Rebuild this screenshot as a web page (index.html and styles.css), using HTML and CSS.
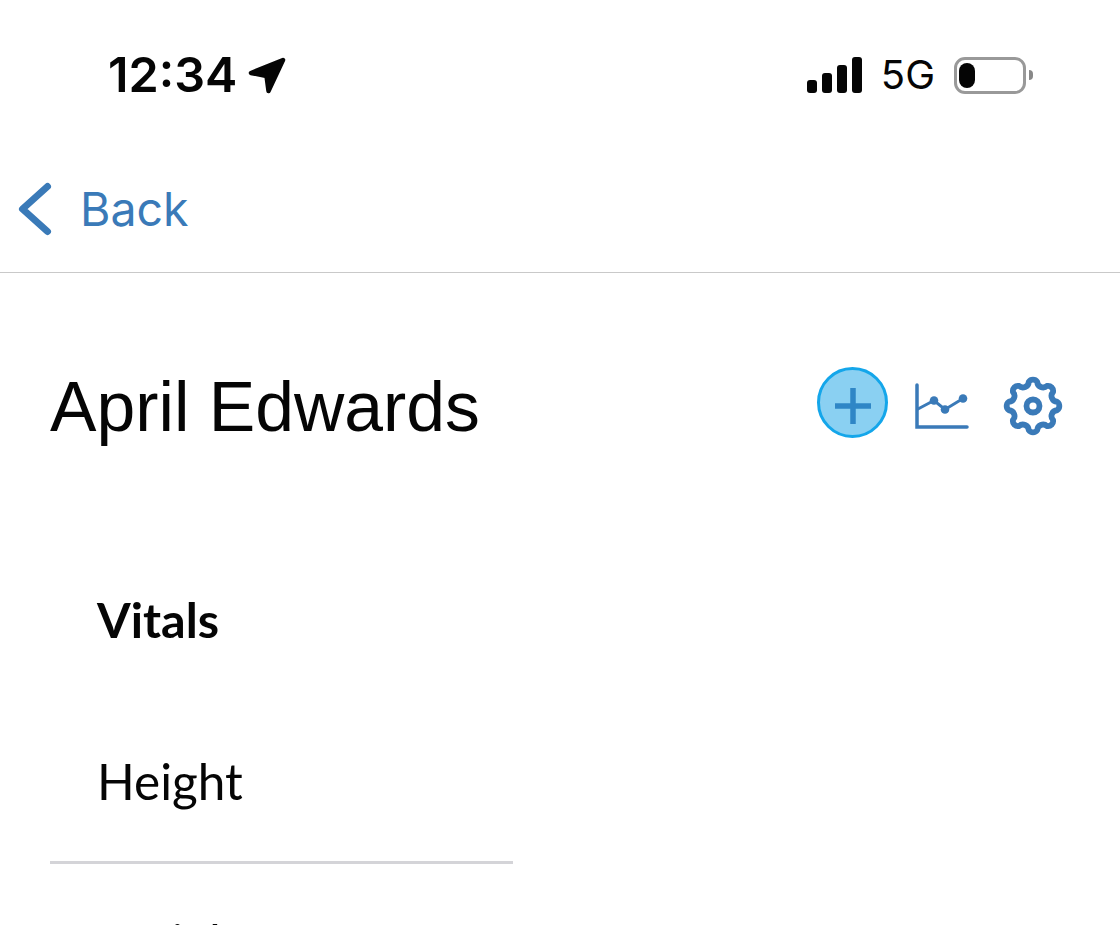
FILE: index.html
```html
<!DOCTYPE html>
<html lang="en">
<head>
<meta charset="utf-8">
<title>April Edwards</title>
<link rel="stylesheet" href="styles.css">
</head>
<body>
<div class="screen">
  <header class="status">
    <div class="status-left">
      <span class="time">12:34</span>
      <svg class="loc" width="40" height="40" viewBox="0 0 40 40"><path d="M36 5 L4 18 L19.5 21 L21.5 36 Z" fill="#050505" stroke="#050505" stroke-width="4.5" stroke-linejoin="round"/></svg>
    </div>
    <div class="status-right">
      <div class="bars"><i class="b1"></i><i class="b2"></i><i class="b3"></i><i class="b4"></i></div>
      <span class="net">5G</span>
      <div class="battery"><div class="charge"></div></div>
      <div class="nub"></div>
    </div>
  </header>
  <nav class="nav">
    <svg class="chev" width="36" height="56" viewBox="0 0 36 56"><path d="M30.5 5.5 L5.5 28 L30.5 50.5" fill="none" stroke="#3a7ab8" stroke-width="7" stroke-linecap="round" stroke-linejoin="round"/></svg>
    <span class="back">Back</span>
  </nav>
  <section class="title-row">
    <h1 class="name">April Edwards</h1>
    <div class="actions">
      <div class="add"><svg width="36" height="36" viewBox="0 0 36 36"><path d="M18 0 V36 M0 18 H36" stroke="#2f86c6" stroke-width="5.5" fill="none"/></svg></div>
      <svg class="chart" width="54" height="46" viewBox="0 0 54 46"><path d="M2 2 V44 H52" fill="none" stroke="#3a7ab8" stroke-width="3.5" stroke-linecap="round"/><path d="M2 26.5 L19 17.5 L30 26.5 L48 15.5" fill="none" stroke="#3a7ab8" stroke-width="3"/><circle cx="19" cy="17.5" r="4.3" fill="#3a7ab8"/><circle cx="30" cy="26.5" r="4.3" fill="#3a7ab8"/><circle cx="48" cy="15.5" r="4.3" fill="#3a7ab8"/></svg>
      <svg class="gear" width="60" height="60" viewBox="0 0 60 60" fill="none" stroke="#3a7ab8" stroke-width="5.8" stroke-linejoin="round"><circle cx="30" cy="30" r="6.5"/><path d="M25.75 5.87 A5.2 5.2 0 0 1 34.25 5.87 A5.84 5.84 0 0 0 44.05 9.93 A5.2 5.2 0 0 1 50.07 15.95 A5.84 5.84 0 0 0 54.13 25.75 A5.2 5.2 0 0 1 54.13 34.25 A5.84 5.84 0 0 0 50.07 44.05 A5.2 5.2 0 0 1 44.05 50.07 A5.84 5.84 0 0 0 34.25 54.13 A5.2 5.2 0 0 1 25.75 54.13 A5.84 5.84 0 0 0 15.95 50.07 A5.2 5.2 0 0 1 9.93 44.05 A5.84 5.84 0 0 0 5.87 34.25 A5.2 5.2 0 0 1 5.87 25.75 A5.84 5.84 0 0 0 9.93 15.95 A5.2 5.2 0 0 1 15.95 9.93 A5.84 5.84 0 0 0 25.75 5.87 Z"/></svg>
    </div>
  </section>
  <section class="vitals">
    <h2 class="vitals-title">Vitals</h2>
    <div class="row">Height</div>
    <div class="row">Weight</div>
  </section>
</div>
</body>
</html>
```
FILE: styles.css
```css
html, body { margin: 0; padding: 0; background: #fff; }
body { width: 1120px; height: 925px; overflow: hidden; font-family: "Lato", sans-serif; color: #050505; }
.screen { display: flex; flex-direction: column; height: 925px; overflow: hidden; }
.status { display: flex; justify-content: space-between; align-items: center; height: 150px; flex: none; padding: 0 87px 0 108px; box-sizing: border-box; }
.status-left { display: flex; align-items: center; gap: 10px; }
.time { font-family: "Inter", sans-serif; font-weight: 600; font-size: 48.5px; line-height: 56px; }
.status-right { display: flex; align-items: center; }
.bars { display: flex; align-items: flex-end; gap: 5px; height: 36px; margin-right: 19px; }
.bars i { display: block; width: 10px; background: #050505; border-radius: 3px; }
.b1 { height: 13px; } .b2 { height: 20px; } .b3 { height: 28px; } .b4 { height: 36px; }
.net { font-family: "Inter", sans-serif; font-size: 40px; line-height: 44px; margin-right: 19px; }
.battery { width: 72px; height: 37px; box-sizing: border-box; border: 3px solid #999; border-radius: 11px; padding: 3px 2px; }
.charge { width: 16px; height: 100%; background: #050505; border-radius: 8px; }
.nub { width: 4px; height: 10px; background: #888; border-radius: 0 5px 5px 0; margin-left: 3px; }
.nav { display: flex; align-items: center; gap: 27px; height: 123px; flex: none; box-sizing: border-box; padding: 0 0 4px 17px; border-bottom: 1px solid #c9c9c9; }
.back { font-family: "Inter", sans-serif; font-size: 46.5px; color: #3a7ab8; font-weight: 400; }
.title-row { display: flex; justify-content: space-between; align-items: flex-start; flex: none; box-sizing: border-box; height: 318px; padding: 94px 57px 0 50px; }
.name { margin: 2px 0 0; font-family: "Liberation Sans", sans-serif; font-weight: 400; font-size: 69.7px; line-height: 76px; }
.actions { display: flex; align-items: center; }
.add { display: flex; align-items: center; justify-content: center; width: 71px; height: 71px; box-sizing: border-box; border: 3px solid #14a6ea; border-radius: 50%; background: #8ad0f2; margin: 0 27px 6px 0; padding-top: 6px; }
.chart { margin-right: 34px; }
.vitals { padding-left: 50px; }
.vitals-title { margin: 0 0 0 47px; font-size: 48.5px; font-weight: 700; line-height: 56px; }
.row { width: 463px; box-sizing: border-box; padding: 0 0 0 47px; font-size: 49.5px; line-height: 58px; }
.vitals-title + .row { margin-top: 105px; padding-bottom: 51px; border-bottom: 3px solid #d4d4d8; }
.row + .row { padding-top: 49px; }
```
